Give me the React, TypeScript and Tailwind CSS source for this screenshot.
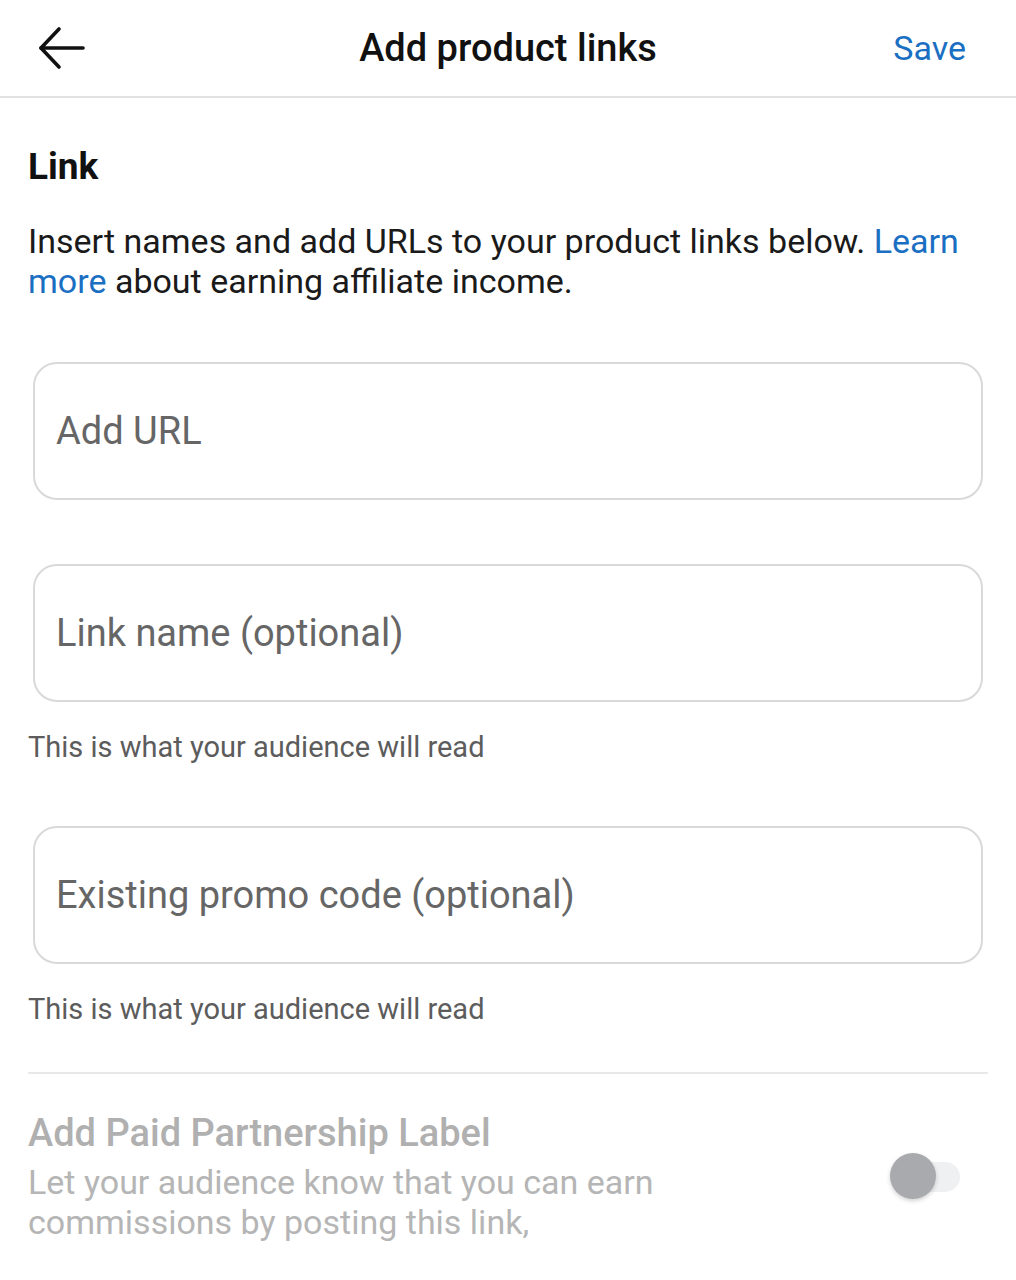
import { useState } from 'react';

function BackArrow() {
  return (
    <svg width="48" height="44" viewBox="0 0 48 44" fill="none" stroke="#111" strokeWidth="3.6" strokeLinecap="round" strokeLinejoin="round">
      <path d="M45 22H3" />
      <path d="M21 3L3 22L21 41" />
    </svg>
  );
}

function Field({ placeholder }: { placeholder: string }) {
  return (
    <div className="h-[138px] mx-[5px] rounded-[24px] border-2 border-[#d9d9d9] flex items-center px-[21px]">
      <input
        className="w-full bg-transparent outline-none text-[38px] text-[#333] placeholder:text-[#666]"
        placeholder={placeholder}
      />
    </div>
  );
}

function Helper() {
  return <p className="text-[29px] leading-[34px] text-[#5c5c5c] mt-[28px]">This is what your audience will read</p>;
}

export default function App() {
  const [on] = useState(false);
  return (
    <main className="w-[1016px] h-[1280px] bg-white font-['Roboto',sans-serif] overflow-hidden">
      <header className="h-[98px] border-b-2 border-[#e2e2e2] grid grid-cols-[1fr_auto_1fr] items-center pl-[38px] pr-[50px]">
        <BackArrow />
        <h1 className="text-[38px] font-medium text-[#111] translate-x-[6px]">Add product links</h1>
        <button className="justify-self-end text-[34px] text-[#1b6fc2]">Save</button>
      </header>

      <section className="px-7">
        <h2 className="mt-[47px] text-[37px] leading-[43px] font-bold text-[#111]">Link</h2>
        <p className="mt-[33px] text-[34px] leading-[40px] text-[#1a1a1a]">
          Insert names and add URLs to your product links below. <a className="text-[#1b6fc2]">Learn</a>{' '}
          <a className="text-[#1b6fc2]">more</a> about earning affiliate income.
        </p>

        <div className="mt-[61px]">
          <Field placeholder="Add URL" />
        </div>
        <div className="mt-[64px]">
          <Field placeholder="Link name (optional)" />
        </div>
        <Helper />
        <div className="mt-[62px]">
          <Field placeholder="Existing promo code (optional)" />
        </div>
        <Helper />

        <div className="mt-[46px] border-t-2 border-[#e8e8e8]" />

        <div className="mt-[38px] flex items-center justify-between">
          <div>
            <h3 className="text-[38px] leading-[42px] font-medium text-[#b0b0b0]">Add Paid Partnership Label</h3>
            <p className="mt-[8px] text-[34px] leading-[40px] text-[#b5b5b5] w-[680px]">
              Let your audience know that you can earn commissions by posting this link,
            </p>
          </div>
          <div className="relative w-[72px] h-[48px] mr-[26px]">
            <div className="absolute left-[14px] top-[9px] w-[56px] h-[30px] rounded-full bg-[#eff0f2]" />
            <div
              className={`absolute top-0 w-[46px] h-[46px] rounded-full bg-[#a9aaad] shadow-[0_2px_4px_rgba(0,0,0,0.18)] ${on ? 'left-[26px]' : 'left-0'}`}
            />
          </div>
        </div>
      </section>
    </main>
  );
}
